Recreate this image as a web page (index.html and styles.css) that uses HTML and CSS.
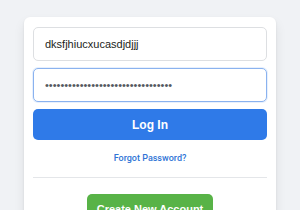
FILE: index.html
```html
<!DOCTYPE html>
<html lang="en">
<head>
  <meta charset="UTF-8" />
  <meta name="viewport" content="width=device-width, initial-scale=1.0" />
  <title>Log In</title>
  <link rel="stylesheet" href="styles.css">
</head>
<body>
  <div class="login-card">
    <form class="login-form" onsubmit="return false">
      <input type="text" class="field" value="dksfjhiucxucasdjdjjj" />
      <input type="password" class="field focused" value="abcdefghijklmnopqrstuvwxyz1234567" />
      <button type="submit" class="btn-login">Log In</button>
      <div class="forgot"><a href="#">Forgot Password?</a></div>
      <div class="divider"></div>
      <div class="create-wrap">
        <button type="button" class="btn-create">Create New Account</button>
      </div>
    </form>
  </div>
</body>
</html>
```

FILE: styles.css
```css
body {
  margin: 0;
  background-color: #f0f2f5;
  font-family: "Liberation Sans", Arial, sans-serif;
  height: 210px;
  overflow: hidden;
}
.login-card {
  margin: 17px 0 0 24px;
  width: 252px;
  box-sizing: border-box;
  padding: 10px 9px 20px;
  background: #ffffff;
  border-radius: 6px;
  box-shadow: 0 1px 2px rgba(0, 0, 0, 0.1), 0 6px 12px rgba(0, 0, 0, 0.08);
}
.login-form {
  display: flex;
  flex-direction: column;
  gap: 7px;
}
.field {
  width: 100%;
  height: 34px;
  box-sizing: border-box;
  padding: 0 11px;
  border: 1px solid #dddfe2;
  border-radius: 5px;
  font-family: inherit;
  font-size: 11px;
  color: #1c1e21;
  outline: none;
}
.field.focused {
  border-color: #8ab2ef;
  box-shadow: 0 0 0 1px #e7f0fd;
  color: #55595f;
}
.btn-login {
  height: 31px;
  border: none;
  border-radius: 5px;
  background-color: #2f7ae8;
  color: #ffffff;
  font-family: inherit;
  font-size: 12px;
  font-weight: bold;
  cursor: pointer;
}
.forgot {
  margin-top: 3px;
  text-align: center;
  line-height: 12px;
}
.forgot a {
  font-family: Roboto, "Liberation Sans", sans-serif;
  font-size: 9px;
  font-weight: 500;
  color: #2f74d6;
  text-decoration: none;
}
.divider {
  height: 1px;
  margin-top: 6px;
  background-color: #e4e6e9;
}
.create-wrap {
  display: flex;
  justify-content: center;
  margin-top: 9px;
}
.btn-create {
  width: 126px;
  height: 30px;
  border: none;
  border-radius: 5px;
  background-color: #58b347;
  color: #ffffff;
  font-family: inherit;
  font-size: 11px;
  font-weight: bold;
  cursor: pointer;
}
```
